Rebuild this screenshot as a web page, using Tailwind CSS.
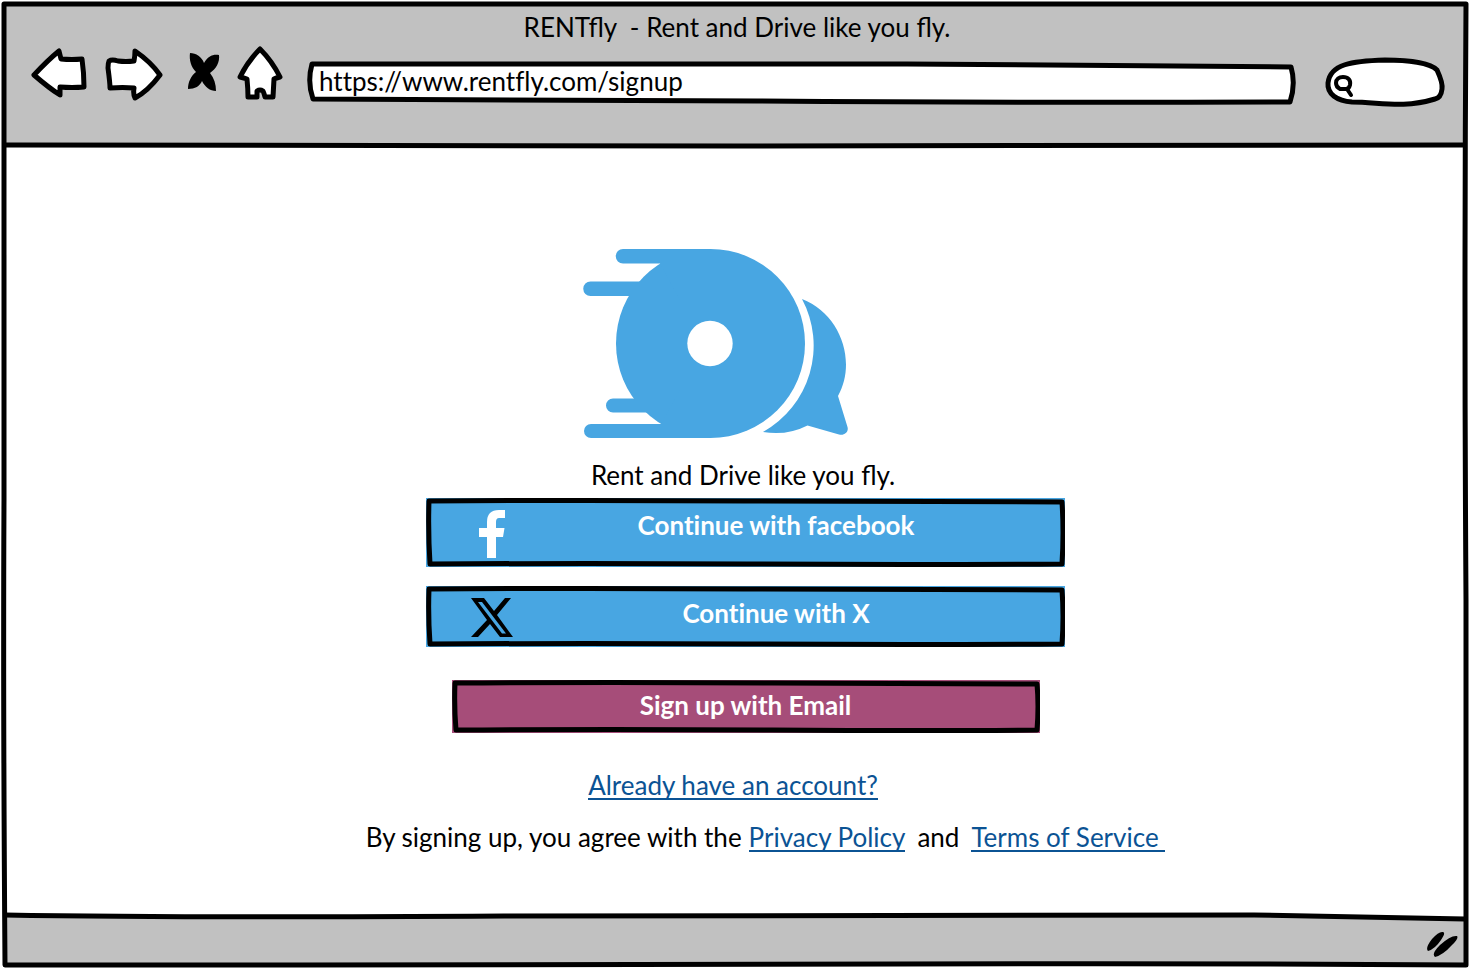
<!DOCTYPE html>
<html lang="en">
<head>
<meta charset="utf-8">
<meta name="viewport" content="width=device-width, initial-scale=1">
<title>RENTfly - Rent and Drive like you fly.</title>
<script src="https://cdn.jsdelivr.net/npm/@tailwindcss/browser@4"></script>
</head>
<body class="relative flex min-h-screen flex-col bg-white font-['Lato','Liberation_Sans',sans-serif] text-[26px] leading-8 text-black">

<header class="relative ml-1 mr-1 mt-1 flex h-[142px] flex-col bg-[#c1c1c1]">
  <h1 class="mt-[7px] whitespace-pre pl-1 text-center">RENTfly  - Rent and Drive like you fly.</h1>
  <nav class="mt-[2px] flex h-[58px] items-center pl-[27px] pr-[21px]" aria-label="Browser">
    <button type="button" aria-label="Back" class="mr-[18px] shrink-0">
      <svg class="block h-[58px] w-14" viewBox="31 45 56 58" fill="#fff" stroke="#000" stroke-width="5" stroke-linejoin="round"><path d="M34 75Q48 60 59 51L61 59Q72 60 82 59Q84 73 84 87Q72 88 60 87L60 95Q49 88 34 75Z"/></svg>
    </button>
    <button type="button" aria-label="Forward" class="mr-6 shrink-0">
      <svg class="block h-[58px] w-[58px]" viewBox="105 45 58 58" fill="#fff" stroke="#000" stroke-width="5" stroke-linejoin="round"><path d="M109 61Q112 59 118 61Q126 62 134 61Q135 56 135 51Q151 62 160 75Q148 91 135 98Q133 94 134 88Q123 87 110 88Q110 83 108 68Q108 63 109 61Z"/></svg>
    </button>
    <button type="button" aria-label="Stop" class="mr-4 shrink-0">
      <svg class="block h-[58px] w-[34px]" viewBox="187 44 34 58"><path d="M190 52C196 52 202 56 204 62C208 55 213 53 219 54C220 61 216 68 210 72C214 77 216 83 216 90C210 90 205 86 202 80C200 85 195 88 188 88C188 81 191 75 196 71C191 66 189 59 190 52Z"/></svg>
    </button>
    <button type="button" aria-label="Home" class="mr-[22px] shrink-0">
      <svg class="block h-[58px] w-12" viewBox="237 45 48 58" fill="#fff" stroke="#000" stroke-width="5" stroke-linejoin="round"><path d="M260 49Q272 61 280 77Q276 78 274 79L273 97H265Q264 93 263 91Q260 89 257 91L257 97H248Q248 89 247 79Q244 78 240 77Q248 61 260 49Z"/></svg>
    </button>
    <label class="relative mr-[30px] mt-[18px] block h-[42px] min-w-0 flex-1">
      <span class="hidden">Address</span>
      <svg class="absolute inset-0 h-full w-full overflow-visible" viewBox="0 0 988 42" preserveAspectRatio="none" fill="#fff" stroke="#000" stroke-width="5" stroke-linejoin="round"><path vector-effect="non-scaling-stroke" d="M5 2Q300 1 600 2L984 5Q989 22 983 40Q700 41 450 39L6 37Q0 20 5 2Z"/></svg>
      <input type="text" aria-label="Address" value="https://www.rentfly.com/signup" class="relative block h-[38px] w-full bg-transparent pl-3 leading-8 outline-none [font-variant-ligatures:none]">
    </label>
    <label class="relative mt-3 block h-12 w-[120px] shrink-0">
      <span class="hidden">Search</span>
      <svg class="absolute inset-0 h-full w-full overflow-visible" viewBox="1325 55 120 48" fill="#fff" stroke="#000" stroke-width="5" stroke-linecap="round" stroke-linejoin="round"><path d="M1328 82C1330 63 1352 60 1385 59C1408 59 1430 62 1437 69Q1443 82 1442 88Q1441 97 1435 98C1402 108 1380 101 1352 101C1337 100 1327 93 1328 82Z"/><path stroke-width="4" d="M1343 76C1348 76 1351 79 1350 84Q1349 88 1346 88H1340Q1336 86 1336 82C1336 78 1339 76 1343 76ZM1347 88L1351 94"/></svg>
      <input type="text" aria-label="Search" class="relative block h-full w-full bg-transparent pl-8 pr-3 outline-none">
    </label>
  </nav>
  <svg class="absolute inset-x-0 bottom-[-2px] h-[5px] w-full overflow-visible" viewBox="0 0 1462 5" preserveAspectRatio="none" fill="none" stroke="#000" stroke-width="5"><path vector-effect="non-scaling-stroke" d="M2 2Q400 4 730 3T1460 2"/></svg>
</header>

<main class="flex flex-1 flex-col items-center px-6 pt-[102px]">
  <svg class="mr-[39px] block h-[191px] w-[267px]" viewBox="582 248 267 191" role="img" aria-label="RENTfly logo" fill="#48a6e2">
    <circle cx="710.500" cy="343.500" r="94.500"/>
    <path d="M623 249H710V300H680L660 263.500H623A7.200 7.200 0 0 1 623 249ZM590.500 281.500H645V296H590.500A7.200 7.200 0 0 1 590.500 281.500ZM613 398.500H650V412.500H613A7 7 0 0 1 613 398.500ZM591 424H661L680 390H710V438H591A7 7 0 0 1 591 424Z"/>
    <circle cx="710" cy="343.500" r="22.700" fill="#fff"/>
    <path d="M802 299C841 314 857 362 838 396L847.500 427C849 432 844 436 839 434.500L807.500 425.500Q787 436 763 432A99 99 0 0 0 802 299Z"/>
  </svg>
  <p class="ml-4 mt-5">Rent and Drive like you fly.</p>

  <button type="button" class="relative ml-[21px] mt-[7px] flex h-[69px] w-full max-w-[639px] items-start bg-[#48a6e2] pl-[45px] pr-[26px] pt-3 font-bold text-white [font-variant-ligatures:none]">
    <svg class="absolute inset-0 h-full w-full" viewBox="0 0 639 69" preserveAspectRatio="none" fill="none" stroke="#000" stroke-width="5" stroke-linejoin="round"><path vector-effect="non-scaling-stroke" d="M3 3Q160 2 320 3T636 4Q638 34 636 66Q480 67 320 66T4 66Q2 34 3 3Z"/></svg>
    <svg class="relative block h-12 w-[42px]" viewBox="0 0 42 48" fill="#fff" aria-hidden="true"><path d="M34 0V8H28Q25 8 25 12V18H33.500L32 27H25V48H16V27H8V18H16V12Q16 0 28 0Z"/></svg>
    <span class="relative -mt-px flex-1">Continue with facebook</span>
  </button>

  <button type="button" class="relative ml-[21px] mt-[19px] flex h-[61px] w-full max-w-[639px] items-start bg-[#48a6e2] pl-[45px] pr-[26px] pt-3 font-bold text-white [font-variant-ligatures:none]">
    <svg class="absolute inset-0 h-full w-full" viewBox="0 0 639 61" preserveAspectRatio="none" fill="none" stroke="#000" stroke-width="5" stroke-linejoin="round"><path vector-effect="non-scaling-stroke" d="M3 3Q160 2 320 3T636 4Q638 30 636 58Q480 59 320 58T4 58Q2 30 3 3Z"/></svg>
    <svg class="relative block h-10 w-[42px]" viewBox="0 0 42 40" fill="#000" aria-hidden="true"><path fill-rule="evenodd" d="M0 0H13L23 13L34 0H40L26 17L42 39H29L19 26L7 39H0L16 22ZM7 4L31 35.500H35L11 4Z"/></svg>
    <span class="relative -mt-px flex-1">Continue with X</span>
  </button>

  <button type="button" class="relative ml-[21px] mt-[33px] block h-[53px] w-full max-w-[588px] bg-[#a64d79] pb-1 font-bold text-white">
    <svg class="absolute inset-0 h-full w-full" viewBox="0 0 588 53" preserveAspectRatio="none" fill="none" stroke="#000" stroke-width="5" stroke-linejoin="round"><path vector-effect="non-scaling-stroke" d="M3 3Q160 2 320 3T585 4Q587 26 585 50Q480 51 320 50T4 50Q2 26 3 3Z"/></svg>
    <span class="relative">Sign up with Email</span>
  </button>

  <a href="#" class="mr-1 mt-9 h-[31px] border-b-2 border-[#0b5394] text-[#0b5394]">Already have an account?</a>

  <p class="ml-[61px] mt-[21px] flex flex-wrap pb-10">
    <span class="mr-[7px]">By signing up, you agree with the</span>
    <a href="#" class="mr-3 h-[31px] border-b-2 border-[#0b5394] text-[#0b5394]">Privacy Policy</a>
    <span class="mr-3">and</span>
    <a href="#" class="h-[31px] whitespace-pre border-b-2 border-[#0b5394] text-[#0b5394]">Terms of Service </a>
  </p>
</main>

<footer class="relative mb-1 ml-1 mr-1 h-[51px]">
  <svg class="block h-full w-full overflow-visible" viewBox="0 0 1462 51" preserveAspectRatio="none" stroke="#000" stroke-width="5"><path d="M1 0Q180 3 500 1T1250 0L1461 4V50H1Z" fill="#c1c1c1" stroke="none"/><path vector-effect="non-scaling-stroke" fill="none" d="M1 0Q180 3 500 1T1250 0L1461 4"/></svg>
  <svg class="absolute bottom-[7px] right-2 h-7 w-8" viewBox="0 0 32 28" aria-hidden="true"><path d="M17 1Q20 2 15 9Q9 18 2 20Q-1 17 6 8Q13 0 17 1ZM31 5Q33 7 26 14Q17 24 9 26Q5 23 14 14Q25 4 31 5Z"/></svg>
</footer>

<svg class="pointer-events-none absolute inset-0 h-full w-full" viewBox="0 0 1470 970" preserveAspectRatio="none" fill="none" stroke="#000" stroke-width="5" stroke-linejoin="round" aria-hidden="true"><path vector-effect="non-scaling-stroke" d="M4 4L1466 4Q1464 300 1466 600L1466 965Q1200 963 900 964T300 965L5 965Q3 700 4 500Z"/></svg>
</body>
</html>
